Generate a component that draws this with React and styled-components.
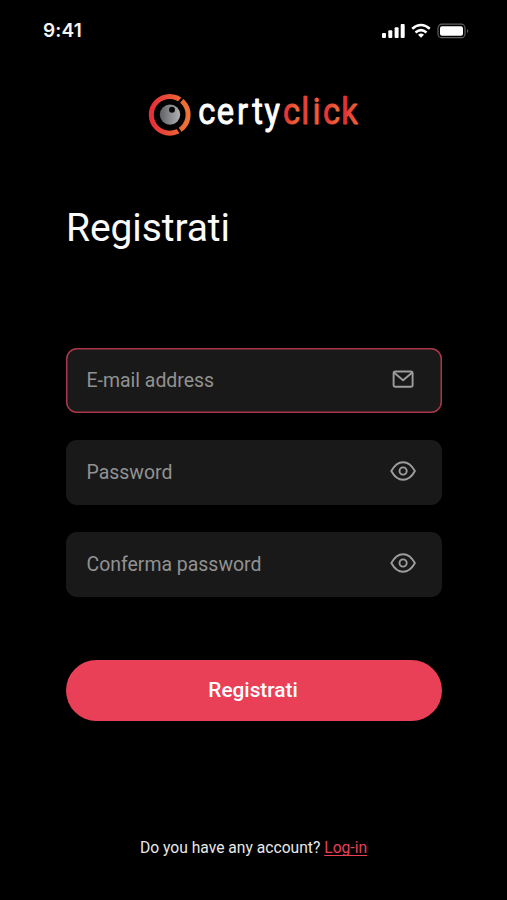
import React from "react";
import styled, { createGlobalStyle } from "styled-components";

const GlobalStyle = createGlobalStyle`
  * { box-sizing: border-box; }
  body { margin: 0; background: #000; }
`;

const Screen = styled.main`
  width: 507px;
  height: 900px;
  display: flex;
  flex-direction: column;
  background: #000;
  color: #fff;
  font-family: Roboto, sans-serif;
  overflow: hidden;
`;

const StatusBar = styled.header`
  height: 62px;
  padding: 0 38px 0 43px;
  display: flex;
  align-items: center;
  justify-content: space-between;
`;

const Clock = styled.span`
  font: 600 19px/24px Inter, sans-serif;
  letter-spacing: 0.2px;
  color: #f4f4f4;
`;

const StatusIcons = styled.svg`
  width: 88px;
  height: 20px;
  display: block;
`;

const Brand = styled.div`
  height: 106px;
  padding: 28px 0 0 145px;
`;

const Logo = styled.svg`
  display: block;
  width: 230px;
  height: 56px;
  overflow: visible;
`;

const Wordmark = styled.text`
  font-family: Roboto, sans-serif;
  font-size: 37.5px;
  font-weight: 400;
  stroke-width: 0.9px;
  stroke-linejoin: round;
`;

const Title = styled.h1`
  margin: 36px 0 0 66px;
  height: 48px;
  font-size: 39px;
  line-height: 48px;
  font-weight: 400;
  letter-spacing: -0.1px;
  color: #fafafa;
`;

const Form = styled.form`
  margin: 96px 65px 0 66px;
  display: flex;
  flex-direction: column;
  gap: 27px;
`;

const Field = styled.label`
  height: 65px;
  padding: 0 25px 0 20.5px;
  display: flex;
  align-items: center;
  justify-content: space-between;
  border-radius: 11px;
  background: #191919;
  box-shadow: ${(p) => (p.$active ? "inset 0 0 0 1.5px #a93649" : "none")};
`;

const Placeholder = styled.span`
  font-size: 19.45px;
  line-height: 24px;
  color: #929292;
`;

const FieldIcon = styled.svg`
  width: 27px;
  height: 24px;
  display: block;
  margin-bottom: 3px;
  fill: none;
  stroke: #9d9d9d;
  stroke-width: 1.9;
  stroke-linejoin: round;
  stroke-linecap: round;
`;

const Submit = styled.button`
  height: 61px;
  margin-top: 36px;
  padding: 0 2px 2px 0;
  border: 0;
  border-radius: 31px;
  background: #e94057;
  color: #fff;
  font: 500 20.8px/24px Roboto, sans-serif;
`;

const Footer = styled.p`
  margin: 116px 0 0;
  text-align: center;
  font-size: 15.65px;
  line-height: 22px;
  color: #e9e9e9;
`;

const LoginLink = styled.a`
  color: #e94057;
  text-decoration: underline;
  text-underline-offset: 2px;
  text-decoration-thickness: 1px;
  text-decoration-skip-ink: none;
`;

function MailIcon() {
  return (
    <FieldIcon viewBox="0 0 27 24">
      <rect x="3.6" y="4.5" width="19" height="15.2" rx="1.8" />
      <path d="M4.2 5.7 13.1 13.2 22 5.7" />
    </FieldIcon>
  );
}

function EyeIcon() {
  return (
    <FieldIcon viewBox="0 0 27 24">
      <path d="M1.3 12C4.4 6.4 8.2 3.2 13.1 3.2S21.8 6.4 24.9 12C21.8 17.6 18 20.8 13.1 20.8S4.4 17.6 1.3 12Z" />
      <circle cx="13.1" cy="12" r="3.6" />
    </FieldIcon>
  );
}

// Condensed lettering: glyph origins are given in drawn pixels and divided by the squeeze factor.
const SQUEEZE = 0.87;
const origins = (xs) => xs.map((x) => (x / SQUEEZE).toFixed(2)).join(" ");
const whiteLetters = origins([53.2, 71.8, 92, 107.2, 119.6]);
const redLetters = origins([137.9, 156.2, 167.5, 178, 196.2]);
const letterSpans = [[138, 154], [156, 168], [164, 173], [178, 194], [198, 214]];
const wordStart = letterSpans[0][0];
const wordEnd = letterSpans[4][1];

function BrandLogo() {
  return (
    <Logo viewBox="0 0 230 56" role="img" aria-label="certyclick">
      <defs>
        <linearGradient id="ring" x1="0" x2="1">
          <stop offset="0" stopColor="#e62f38" />
          <stop offset="1" stopColor="#ef7337" />
        </linearGradient>
        <linearGradient id="lens">
          <stop offset="0" stopColor="#606164" />
          <stop offset="1" stopColor="#b0b1b3" />
        </linearGradient>
        <linearGradient
          id="word"
          gradientUnits="userSpaceOnUse"
          x1={wordStart / SQUEEZE}
          x2={wordEnd / SQUEEZE}
          y1="0"
          y2="0"
        >
          {letterSpans.map(([a, b]) => (
            <React.Fragment key={a}>
              <stop offset={(a - wordStart) / (wordEnd - wordStart)} stopColor="#e32835" />
              <stop offset={(b - wordStart) / (wordEnd - wordStart)} stopColor="#ef6f36" />
            </React.Fragment>
          ))}
        </linearGradient>
      </defs>
      <circle cx="24.7" cy="24.8" r="18.4" fill="none" stroke="url(#ring)" strokeWidth="5" />
      <path d="M33 13.5 39.5 5.5M32 37.5 38 46" stroke="#000" strokeWidth="2.4" />
      <circle cx="25" cy="24.6" r="10.2" fill="url(#lens)" />
      <circle cx="27" cy="19.8" r="3" fill="#080808" />
      <g transform={`scale(${SQUEEZE} 1)`}>
        <Wordmark x={whiteLetters} y="34.3" fill="#fff" stroke="#fff">certy</Wordmark>
        <Wordmark x={redLetters} y="34.3" fill="url(#word)" stroke="url(#word)">click</Wordmark>
      </g>
    </Logo>
  );
}

export default function App() {
  return (
    <>
      <GlobalStyle />
      <Screen>
        <StatusBar>
          <Clock>9:41</Clock>
          <StatusIcons viewBox="0 0 88 20" fill="#fff">
            <rect x="1" y="12" width="4" height="5" rx="1" />
            <rect x="7.3" y="9.3" width="4" height="7.7" rx="1" />
            <rect x="13.6" y="6.3" width="4" height="10.7" rx="1" />
            <rect x="19.7" y="2.9" width="4" height="14.1" rx="1" />
            <g fill="none" stroke="#fff" strokeWidth="2.5">
              <path d="M31.2 7.7Q40 .3 48.8 7.7" />
              <path d="M34.5 11.5Q40 6.8 45.5 11.5" />
            </g>
            <path d="M37 13.7Q40 11.3 43 13.7L40 16.8Z" />
            <rect x="57" y="3.2" width="27" height="13.5" rx="3.8" fill="none" stroke="#606060" strokeWidth="1.2" />
            <rect x="59" y="5.2" width="23" height="9.6" rx="2" />
            <path d="M86 7.9Q88.5 9.9 86 12Z" fill="#606060" />
          </StatusIcons>
        </StatusBar>
        <Brand><BrandLogo /></Brand>
        <Title>Registrati</Title>
        <Form onSubmit={(e) => e.preventDefault()}>
          <Field $active><Placeholder>E-mail address</Placeholder><MailIcon /></Field>
          <Field><Placeholder>Password</Placeholder><EyeIcon /></Field>
          <Field><Placeholder>Conferma password</Placeholder><EyeIcon /></Field>
          <Submit>Registrati</Submit>
        </Form>
        <Footer>Do you have any account? <LoginLink>Log-in</LoginLink></Footer>
      </Screen>
    </>
  );
}
